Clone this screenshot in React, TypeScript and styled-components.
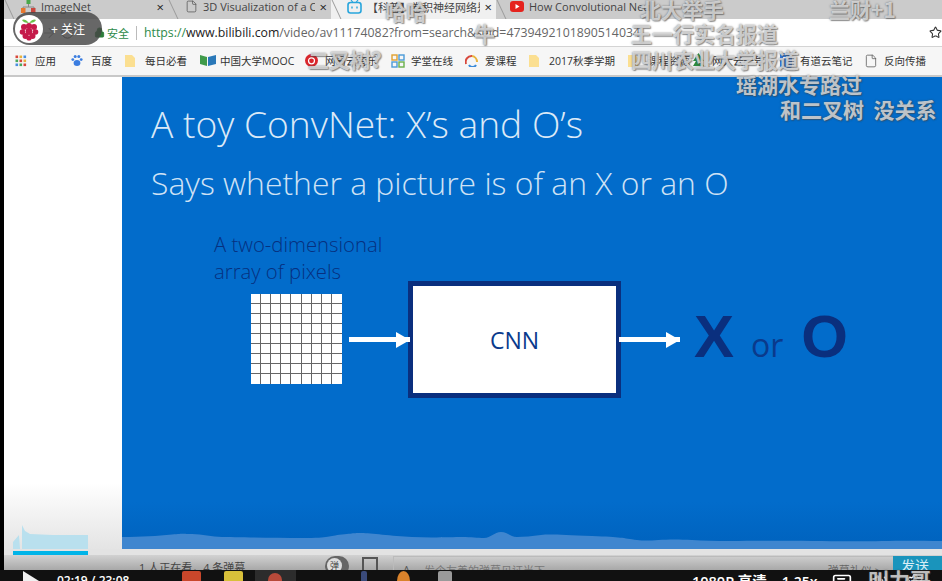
import React from "react"
import styled, { createGlobalStyle } from "styled-components"
import { File, RotateCw, ArrowRight, Star, Lock, Settings, Volume2, MessageSquareText } from "lucide-react"

const cjk = `"Open Sans", "Noto Sans CJK SC", sans-serif`

const GlobalStyle = createGlobalStyle`
  html, body { margin: 0; padding: 0; background: #000; }
  * { box-sizing: border-box; }
`

type IconKind = "apps" | "paw" | "folder" | "book" | "netease" | "blocks" | "arc" | "tree" | "note" | "file"

const bookmarks: { icon: IconKind; label: string; w: number }[] = [
  { icon: "apps", label: "应用", w: 56 },
  { icon: "paw", label: "百度", w: 54 },
  { icon: "folder", label: "每日必看", w: 75 },
  { icon: "book", label: "中国大学MOOC", w: 105 },
  { icon: "netease", label: "网易云音乐", w: 86 },
  { icon: "blocks", label: "学堂在线", w: 74 },
  { icon: "arc", label: "爱课程", w: 64 },
  { icon: "folder", label: "2017秋季学期", w: 99 },
  { icon: "folder", label: "课程资源", w: 64 },
  { icon: "tree", label: "网大云一号", w: 88 },
  { icon: "note", label: "有道云笔记", w: 84 },
  { icon: "file", label: "反向传播", w: 70 }
]

const danmaku = [
  { text: "哈哈", x: 385, y: -3 },
  { text: "牛", x: 474, y: 19 },
  { text: "北大举手", x: 640, y: -5 },
  { text: "兰财+1", x: 829, y: -5 },
  { text: "王一行实名报道", x: 631, y: 19 },
  { text: "二叉树?", x: 308, y: 45 },
  { text: "四川农业大学报道", x: 631, y: 45 },
  { text: "瑶湖水专路过", x: 736, y: 70 },
  { text: "和二叉树  没关系", x: 780, y: 95 },
  { text: "叫力哥", x: 868, y: 565 }
]

const trayLeft = [
  { color: "#c9472b", w: 19, ml: 51 },
  { color: "#d8c03a", w: 19, ml: 23 }
]

const trayRight = [
  { color: "#3a4a7a", w: 6, ml: 65, round: false },
  { color: "#d9822b", w: 13, ml: 30, round: true },
  { color: "#9a9a9a", w: 14, ml: 28, round: false }
]

function BookmarkIcon({ kind }: { kind: IconKind }) {
  if (kind === "folder") return <svg width="11" height="14" viewBox="0 0 11 14"><path d="M0 1h7l3 3v9H0z" fill="#fbdf91" /></svg>
  if (kind === "file") return <File size={14} strokeWidth={1.3} color="#555" />
  if (kind === "apps") {
    const c = ["#d8483c", "#e8b33c", "#4a8ee0", "#4aa85a", "#d8483c", "#e8b33c", "#4a8ee0", "#4aa85a", "#d8483c"]
    return (
      <svg width="12" height="12" viewBox="0 0 12 12">
        {c.map((f, i) => <rect key={i} x={(i % 3) * 4 + 0.5} y={Math.floor(i / 3) * 4 + 0.5} width="2.6" height="2.6" fill={f} />)}
      </svg>
    )
  }
  if (kind === "paw") return (
    <svg width="12" height="13" viewBox="0 0 12 13" fill="#3b7de0">
      <ellipse cx="6" cy="9" rx="3.4" ry="3" /><circle cx="1.8" cy="5.6" r="1.4" /><circle cx="10.2" cy="5.6" r="1.4" /><circle cx="4.2" cy="2.6" r="1.5" /><circle cx="7.8" cy="2.6" r="1.5" />
    </svg>
  )
  if (kind === "book") return (
    <svg width="16" height="11" viewBox="0 0 16 11"><path d="M0 0l7 2v9L0 9z" fill="#3f9a4a" /><path d="M16 0L8 2v9l8-2z" fill="#2a78b8" /></svg>
  )
  if (kind === "netease") return (
    <svg width="13" height="13" viewBox="0 0 13 13"><circle cx="6.5" cy="6.5" r="6.5" fill="#d9262c" /><circle cx="6.5" cy="6.8" r="3" fill="none" stroke="#fff" strokeWidth="1.2" /></svg>
  )
  if (kind === "blocks") return (
    <svg width="14" height="14" viewBox="0 0 14 14" fill="none" strokeWidth="1.4">
      <rect x="1" y="1" width="5" height="5" stroke="#e0a030" /><rect x="8" y="1" width="5" height="5" stroke="#4a9ad8" /><rect x="1" y="8" width="5" height="5" stroke="#4a9ad8" /><rect x="8" y="8" width="5" height="5" stroke="#6ab04a" />
    </svg>
  )
  if (kind === "arc") return (
    <svg width="13" height="13" viewBox="0 0 13 13" fill="none" strokeWidth="2"><path d="M1 10A6 6 0 0 1 7 2" stroke="#d8483c" /><path d="M7 2a6 6 0 0 1 5 6" stroke="#e8b33c" /><path d="M4 11a4 4 0 0 0 7 0" stroke="#3a8ad8" /></svg>
  )
  if (kind === "tree") return <svg width="13" height="15" viewBox="0 0 13 15"><path d="M6.5 0L12 8H9l3 5H1l3-5H1z" fill="#2e8b3f" /></svg>
  return <svg width="12" height="15" viewBox="0 0 12 15"><rect width="12" height="15" rx="2" fill="#2f7be8" /><rect x="3" y="4" width="6" height="1.4" fill="#fff" /></svg>
}

export default function App() {
  return (
    <Screen>
      <GlobalStyle />
      <Tabs>
        <Tab $w={164} $pad={17}>
          <svg width="15" height="14" viewBox="0 0 15 14">
            <rect x="5.5" y="0" width="4" height="4" fill="#4aa84a" />
            <rect x="0" y="8" width="4.5" height="5" fill="#e8772e" />
            <rect x="10" y="8" width="4.5" height="5" fill="#c9463d" />
            <path d="M7.5 4v3M2 8V7h11v1" stroke="#888" fill="none" />
          </svg>
          <TabLabel>ImageNet</TabLabel>
          <Close>×</Close>
        </Tab>
        <Tab $w={163} $pad={17}>
          <File size={13} strokeWidth={1.4} color="#555" />
          <TabLabel>3D Visualization of a Cc</TabLabel>
          <Close>×</Close>
        </Tab>
        <Tab $w={165} $pad={16} $active>
          <svg width="15" height="14" viewBox="0 0 15 14" fill="none">
            <path d="M4 0l2 2.5M11 0L9 2.5" stroke="#27a5dc" strokeWidth="1.2" />
            <rect x="1" y="2.5" width="13" height="10.5" rx="2.5" stroke="#27a5dc" strokeWidth="1.6" />
            <path d="M5 6.5v2M10 6.5v2" stroke="#27a5dc" strokeWidth="1.4" />
          </svg>
          <TabLabel>【科普】卷积神经网络是</TabLabel>
          <Close>×</Close>
        </Tab>
        <Tab $w={160} $pad={14}>
          <svg width="14" height="11" viewBox="0 0 14 11"><rect width="14" height="11" rx="3" fill="#e5231e" /><path d="M5.5 3v5l4-2.5z" fill="#fff" /></svg>
          <TabLabel>How Convolutional Neu</TabLabel>
        </Tab>
      </Tabs>

      <Toolbar>
        <NavIcons>
          <ArrowRight size={16} color="#aaa" strokeWidth={1.6} />
          <RotateCw size={15} color="#555" strokeWidth={1.6} />
        </NavIcons>
        <Secure>
          <Lock size={11} color="#2d7d3a" fill="#2d7d3a" />
          <span>安全</span>
        </Secure>
        <Divider />
        <Url>
          <UrlScheme>https://</UrlScheme>www.bilibili.com<UrlRest>/video/av11174082?from=search&amp;seid=4739492101890514034</UrlRest>
        </Url>
        <Star size={13} color="#333" strokeWidth={2} />
      </Toolbar>

      <Bookmarks>
        {bookmarks.map((b) => (
          <Bookmark key={b.label} $w={b.w}>
            <IconSlot><BookmarkIcon kind={b.icon} /></IconSlot>
            <span>{b.label}</span>
          </Bookmark>
        ))}
      </Bookmarks>

      <Player>
        <SideColumn>
          <Histogram viewBox="0 0 75 24" preserveAspectRatio="none">
            <path d="M0 24V17L6 10 7 24h2V0L12 6 17 9 40 10H75V24z" fill="#b9e0ee" />
          </Histogram>
        </SideColumn>
        <Slide>
          <Title>A toy ConvNet: X’s and O’s</Title>
          <Subtitle>Says whether a picture is of an X or an O</Subtitle>
          <Diagram>
            <ArrayColumn>
              <ArrayCaption>A two-dimensional<br />array of pixels</ArrayCaption>
              <PixelGrid>
                {Array.from({ length: 81 }).map((_, i) => <Pixel key={i} />)}
              </PixelGrid>
            </ArrayColumn>
            <FlowArrow $ml={7} />
            <CnnBox>CNN</CnnBox>
            <FlowArrow $ml={-2} />
            <Outcome>
              <BigLetter>X</BigLetter>
              <Or>or</Or>
              <BigLetter>O</BigLetter>
            </Outcome>
          </Diagram>
          <Wave viewBox="0 0 820 18" preserveAspectRatio="none">
            <path d="M0 18V6C20 6 35 5 50 3.5S60 3 70 3 90 6 100 6 150 7 180 7 205 5 220 3.5 232 2 240 2 270 5 290 6 330 6 340 6 355 7 362 7 372 1 379 1 388 6 395 6 410 5 419 4 440 4 470 5 500 7 515 9 539 7 570 9 640 9 700 10 760 9 820 10V18Z" fill="#3f86cf" />
          </Wave>
        </Slide>
      </Player>

      <Seek>
        <SeekPlayed />
      </Seek>

      <InfoBar>
        <Watching>1 人正在看，4 条弹幕</Watching>
        <Toggle><ToggleKnob>弹</ToggleKnob></Toggle>
        <FilterIcon />
        <CommentBox>
          <CommentA>A</CommentA>
          <span>发个友善的弹幕见证当下</span>
          <Etiquette>弹幕礼仪 &gt;</Etiquette>
        </CommentBox>
        <SendButton>发送</SendButton>
      </InfoBar>

      <ControlBar>
        <PlayIcon />
        <Time>02:19 / 23:08</Time>
        {trayLeft.map((s) => <TrayTile key={s.color} $color={s.color} $w={s.w} $ml={s.ml} />)}
        <ActiveTile><ActiveDot /></ActiveTile>
        {trayRight.map((s) => <TrayTile key={s.color} $color={s.color} $w={s.w} $ml={s.ml} $round={s.round} />)}
        <Quality>1080P 高清</Quality>
        <Speed>1.25x</Speed>
        <ControlIcons>
          <MessageSquareText size={20} color="#fff" />
          <Volume2 size={18} color="#fff" />
          <Settings size={18} color="#fff" />
        </ControlIcons>
      </ControlBar>

      <FollowPill>
        <Avatar>
          <svg width="22" height="24" viewBox="0 0 22 24">
            <path d="M11 6C8 2 5 2 4 3c1 2 3 3 7 3zM11 6c3-4 6-4 7-3-1 2-3 3-7 3z" fill="#6cc04a" />
            <g fill="#c51a4a">
              <circle cx="11" cy="9" r="3" /><circle cx="6" cy="10" r="3" /><circle cx="16" cy="10" r="3" />
              <circle cx="4.5" cy="15" r="2.8" /><circle cx="17.5" cy="15" r="2.8" /><circle cx="11" cy="14.5" r="3.4" />
              <circle cx="7.5" cy="19" r="3" /><circle cx="14.5" cy="19" r="3" /><circle cx="11" cy="21" r="2.6" />
            </g>
          </svg>
        </Avatar>
        <FollowText>+ 关注</FollowText>
      </FollowPill>

      {danmaku.map((d) => (
        <Danmaku key={d.text} style={{ left: d.x, top: d.y }}>{d.text}</Danmaku>
      ))}
    </Screen>
  )
}

const Screen = styled.div`
  position: relative;
  width: 942px;
  height: 581px;
  overflow: hidden;
  display: flex;
  flex-direction: column;
  padding-left: 4px;
  background: #000;
  font-family: ${cjk};
`

const Tabs = styled.div`
  height: 19px;
  display: flex;
  align-items: flex-start;
  background: #cbcbcb;
  overflow: hidden;
  flex: none;
`

const Tab = styled.div<{ $w: number; $pad: number; $active?: boolean }>`
  position: relative;
  width: ${(p) => p.$w}px;
  height: 19px;
  display: flex;
  align-items: center;
  gap: 5px;
  padding: 0 4px 6px ${(p) => p.$pad}px;
  background: ${(p) => (p.$active ? "#f0f0f0" : "transparent")};
  color: #444;
  font-size: 11px;
  white-space: nowrap;
  overflow: hidden;
  flex: none;
  &::before {
    content: "";
    position: absolute;
    left: 5px;
    top: 0;
    width: 1px;
    height: 19px;
    background: #9a9a9a;
    transform: skewX(25deg);
  }
`

const TabLabel = styled.span`
  flex: 1;
  overflow: hidden;
`

const Close = styled.span`
  font-size: 13px;
  color: #222;
`

const Toolbar = styled.div`
  height: 27px;
  flex: none;
  display: flex;
  align-items: center;
  padding: 0 0 0 37px;
  background: #fff;
  font-size: 11px;
`

const NavIcons = styled.div`
  width: 53px;
  display: flex;
  align-items: center;
  gap: 3px;
`

const Secure = styled.div`
  width: 42px;
  display: flex;
  align-items: center;
  gap: 2px;
  color: #2d8a4a;
`

const Divider = styled.div`
  width: 1px;
  height: 14px;
  background: #bbb;
`

const Url = styled.div`
  flex: 1;
  margin-left: 7px;
  white-space: nowrap;
  overflow: hidden;
  color: #222;
  font-size: 12.3px;
`

const UrlScheme = styled.span`
  color: #2d8a4a;
`

const UrlRest = styled.span`
  color: #666;
`

const Bookmarks = styled.div`
  height: 31px;
  flex: none;
  display: flex;
  align-items: center;
  padding: 0 0 1px 11px;
  background: #f6f6f6;
  border-top: 1px solid #d4d4d4;
  border-bottom: 2px solid #c8c8c8;
  color: #333;
  font-size: 10.5px;
`

const Bookmark = styled.div<{ $w: number }>`
  width: ${(p) => p.$w}px;
  flex: none;
  display: flex;
  align-items: center;
  white-space: nowrap;
`

const IconSlot = styled.div`
  width: 20px;
  display: flex;
  align-items: center;
`

const Player = styled.div`
  flex: 1;
  min-height: 0;
  display: flex;
  background: #fff;
`

const SideColumn = styled.div`
  width: 118px;
  flex: none;
  display: flex;
  flex-direction: column;
  justify-content: flex-end;
  padding-left: 9px;
  background: linear-gradient(#fff 0, #fff 86%, #e4e4e4 100%);
`

const Histogram = styled.svg`
  width: 75px;
  height: 24px;
  display: block;
`

const Slide = styled.div`
  flex: 1;
  display: flex;
  flex-direction: column;
  padding: 22px 0 0 29px;
  background: linear-gradient(#026ccb 0, #026ccb 90%, #0062bd 100%);
  overflow: hidden;
`

const Title = styled.div`
  font-size: 37.2px;
  font-weight: 300;
  line-height: 50px;
  color: #dbe9f7;
  white-space: nowrap;
`

const Subtitle = styled.div`
  margin-top: 14px;
  font-size: 31.9px;
  font-weight: 300;
  line-height: 40px;
  color: #cfe2f5;
  white-space: nowrap;
`

const Diagram = styled.div`
  display: flex;
  align-items: flex-end;
  margin-top: 37px;
  padding-left: 100px;
  height: 158px;
  color: #0a3a8c;
`

const ArrayColumn = styled.div`
  width: 91px;
  height: 158px;
  position: relative;
  display: flex;
  flex-direction: column;
  justify-content: flex-end;
  padding-bottom: 14px;
`

const ArrayCaption = styled.div`
  position: absolute;
  left: -37px;
  top: -9px;
  font-size: 20.3px;
  line-height: 27px;
  font-weight: 300;
  color: #06307f;
  white-space: nowrap;
`

const PixelGrid = styled.div`
  width: 91px;
  height: 90px;
  display: grid;
  grid-template-columns: repeat(9, 1fr);
  grid-template-rows: repeat(9, 1fr);
  background: #fff;
`

const Pixel = styled.div`
  border-right: 1px solid #666;
  border-bottom: 1px solid #666;
  &:nth-child(9n) { border-right: 0; }
  &:nth-child(n + 73) { border-bottom: 0; }
`

const FlowArrow = styled.div<{ $ml: number }>`
  position: relative;
  width: 61px;
  height: 5px;
  margin: 0 0 56px ${(p) => p.$ml}px;
  background: #fff;
  flex: none;
  &::after {
    content: "";
    position: absolute;
    right: 0;
    top: -5px;
    border-left: 14px solid #fff;
    border-top: 8px solid transparent;
    border-bottom: 8px solid transparent;
  }
`

const CnnBox = styled.div`
  width: 213px;
  height: 117px;
  flex: none;
  display: flex;
  align-items: center;
  justify-content: center;
  margin-left: -2px;
  background: #fff;
  border: 5px solid #0a2f7e;
  font-size: 23px;
  color: #0a3a8c;
`

const Outcome = styled.div`
  display: flex;
  align-items: baseline;
  margin: 0 0 26px 14px;
  color: #0a2f7e;
`

const BigLetter = styled.span`
  font-family: "Liberation Sans", sans-serif;
  font-size: 60px;
  font-weight: 700;
  line-height: 70px;
`

const Or = styled.span`
  margin: 0 18px 0 17px;
  font-size: 32px;
  font-weight: 400;
  color: #0a3a8c;
`

const Wave = styled.svg`
  margin: auto 0 0 -29px;
  display: block;
  width: 820px;
  height: 18px;
  flex: none;
`

const Seek = styled.div`
  height: 6px;
  flex: none;
  background: #e3e3e3;
  padding: 2px 0 0 9px;
`

const SeekPlayed = styled.div`
  width: 75px;
  height: 4px;
  background: #00b4e8;
`

const InfoBar = styled.div`
  height: 15px;
  flex: none;
  display: flex;
  align-items: flex-start;
  padding: 7px 0 0 135px;
  background: linear-gradient(#d2d2d2, #a8a8a8);
  color: #444;
  font-size: 11px;
  white-space: nowrap;
  overflow: hidden;
`

const Watching = styled.span`
  width: 186px;
  line-height: 12px;
`

const Toggle = styled.div`
  width: 24px;
  height: 20px;
  margin-top: -6px;
  border-radius: 10px;
  background: #666;
`

const ToggleKnob = styled.div`
  width: 15px;
  height: 15px;
  margin: 2px;
  border-radius: 50%;
  background: #ddd;
  color: #444;
  font-size: 9px;
  text-align: center;
  line-height: 15px;
`

const FilterIcon = styled.div`
  width: 16px;
  height: 16px;
  margin: -5px 0 0 13px;
  border: 2px solid #555;
`

const CommentBox = styled.div`
  width: 500px;
  height: 20px;
  margin: -6px 0 0 15px;
  padding: 5px 0 0 9px;
  display: flex;
  gap: 14px;
  border: 1px solid #bbb;
  border-right: 0;
  color: #777;
  font-size: 11px;
`

const CommentA = styled.span`
  color: #555;
`

const Etiquette = styled.span`
  margin-left: auto;
  padding-right: 12px;
  color: #666;
`

const SendButton = styled.div`
  width: 49px;
  height: 20px;
  margin-top: -6px;
  padding-left: 8px;
  background: #1a94bc;
  color: #d7eef6;
  font-size: 14px;
  line-height: 20px;
`

const ControlBar = styled.div`
  height: 11px;
  flex: none;
  display: flex;
  align-items: flex-start;
  margin-left: -4px;
  padding-left: 23px;
  background: #111;
  color: #fff;
  font-size: 13px;
  font-weight: 600;
  white-space: nowrap;
  overflow: hidden;
`

const PlayIcon = styled.div`
  width: 0;
  height: 0;
  margin-top: 1px;
  flex: none;
  border-left: 16px solid #f0f0f0;
  border-top: 10px solid transparent;
  border-bottom: 10px solid transparent;
`

const Time = styled.span`
  width: 74px;
  flex: none;
  margin: 3px 0 0 18px;
  font-size: 12px;
  line-height: 15px;
`

const TrayTile = styled.div<{ $color: string; $w: number; $ml: number; $round?: boolean }>`
  width: ${(p) => p.$w}px;
  height: ${(p) => (p.$round ? 20 : 11)}px;
  flex: none;
  margin: 1px 0 0 ${(p) => p.$ml}px;
  border-radius: ${(p) => (p.$round ? "50%" : "2px 2px 0 0")};
  background: ${(p) => p.$color};
`

const ActiveTile = styled.div`
  width: 41px;
  height: 11px;
  flex: none;
  margin-left: 12px;
  padding: 3px 0 0 13px;
  background: #2c2c2c;
`

const ActiveDot = styled.div`
  width: 14px;
  height: 14px;
  border-radius: 50%;
  background: #b84a3a;
`

const Quality = styled.span`
  flex: none;
  margin: 3px 0 0 240px;
  font-size: 14.5px;
  line-height: 17px;
`

const Speed = styled.span`
  flex: none;
  margin: 3px 0 0 15px;
  font-size: 14px;
  line-height: 17px;
`

const ControlIcons = styled.div`
  margin: 3px 0 0 15px;
  display: flex;
  gap: 18px;
`

const FollowPill = styled.div`
  position: absolute;
  left: 13px;
  top: 12px;
  width: 89px;
  height: 33px;
  display: flex;
  align-items: center;
  border-radius: 17px;
  background: rgba(70, 70, 70, 0.82);
`

const Avatar = styled.div`
  width: 28px;
  height: 28px;
  margin-left: 2px;
  display: flex;
  align-items: center;
  justify-content: center;
  border-radius: 50%;
  background: #fff;
`

const FollowText = styled.span`
  margin-left: 8px;
  color: #fff;
  font-size: 12px;
  white-space: pre;
`

const Danmaku = styled.div`
  position: absolute;
  font-family: "Noto Sans CJK SC", sans-serif;
  font-size: 21px;
  font-weight: 700;
  line-height: 28px;
  white-space: pre;
  color: rgba(228, 228, 228, 0.8);
  text-shadow: 0 0 2px rgba(70, 70, 70, 0.7), 1px 1px 1px rgba(70, 70, 70, 0.5);
`
